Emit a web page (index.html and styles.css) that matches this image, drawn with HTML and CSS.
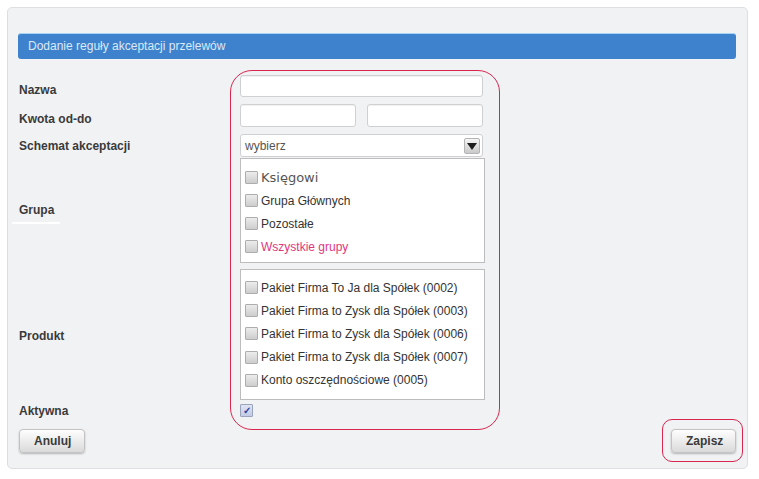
FILE: index.html
```html
<!DOCTYPE html>
<html>
<head>
    <title>Dodanie reguły akceptacji przelewów</title>
    <link rel="stylesheet" href="styles.css">
</head>
<body>
    <div class="panel">
        <div class="panel-header">Dodanie reguły akceptacji przelewów</div>

        <div class="form">
            <div class="label">Nazwa</div>
            <div class="control row-name">
                <input type="text" class="input wide">
            </div>

            <div class="label">Kwota od-do</div>
            <div class="control row-amount">
                <input type="text" class="input half">
                <input type="text" class="input half">
            </div>

            <div class="label">Schemat akceptacji</div>
            <div class="control row-select">
                <div class="select">
                    <span class="select-text">wybierz</span>
                    <span class="select-arrow"><span class="triangle"></span></span>
                </div>
            </div>

            <div class="label label-group">
                <span>Grupa</span>
                <span class="label-line"></span>
            </div>
            <div class="control row-group">
                <div class="list list-group">
                    <div class="item"><span class="cb"></span><span class="big">Księgowi</span></div>
                    <div class="item"><span class="cb"></span>Grupa Głównych</div>
                    <div class="item"><span class="cb"></span>Pozostałe</div>
                    <div class="item pink"><span class="cb"></span>Wszystkie grupy</div>
                </div>
            </div>

            <div class="label">Produkt</div>
            <div class="control row-product">
                <div class="list list-product">
                    <div class="item"><span class="cb"></span>Pakiet Firma To Ja dla Spółek (0002)</div>
                    <div class="item"><span class="cb"></span>Pakiet Firma to Zysk dla Spółek (0003)</div>
                    <div class="item"><span class="cb"></span>Pakiet Firma to Zysk dla Spółek (0006)</div>
                    <div class="item"><span class="cb"></span>Pakiet Firma to Zysk dla Spółek (0007)</div>
                    <div class="item"><span class="cb"></span>Konto oszczędnościowe (0005)</div>
                </div>
            </div>

            <div class="label">Aktywna</div>
            <div class="control row-active">
                <span class="cb checked">&#10003;</span>
            </div>

            <!-- red marker drawn over the controls column -->
            <div class="ring"></div>
        </div>

        <div class="button-row">
            <button class="button">Anuluj</button>
            <span class="ring-small">
                <button class="button">Zapisz</button>
            </span>
        </div>
    </div>
</body>
</html>
```

FILE: styles.css
```css
/* Page and panel */
body {
    margin: 0;
    padding: 7px 11px 0 7px;
    background-color: #fff;
    font-family: "Liberation Sans", Arial, sans-serif;
    font-size: 12px;
    color: #333;
}

.panel {
    background-color: #f1f2f4;
    border: 1px solid #dcdee1;
    border-radius: 5px;
    padding: 25px 11px 15px 10px;
}

.panel-header {
    background-color: #3e82cd;
    border-top: 1px solid #a6d4f2;
    border-radius: 3px;
    height: 25px;
    line-height: 25px;
    padding-left: 10px;
    color: #dce9f7;
    font-size: 12px;
}

/* Form grid */
.form {
    position: relative;
    display: grid;
    grid-template-columns: 222px 245px;
    margin-top: 16px;
}

.label {
    padding-left: 1px;
    font-weight: bold;
    color: #3a3a3a;
    align-self: center;
}

.label-group {
    display: flex;
    flex-direction: column;
}

.label-line {
    width: 48px;
    height: 2px;
    background-color: #fff;
    margin: 5px 0 0 -7px;
}

.control {
    display: flex;
}

.row-name { margin-bottom: 7px; }
.row-amount { margin-bottom: 7px; gap: 11px; }
.row-select { margin-bottom: 1px; }
.row-group { margin-bottom: 6px; }
.row-product { margin-bottom: 4px; }

.input {
    height: 23px;
    box-sizing: border-box;
    border: 1px solid #cfd0d2;
    border-radius: 3px;
    background-color: #fff;
    box-shadow: inset 0 1px 1px rgba(0, 0, 0, 0.06);
    padding: 0 4px;
    margin: 0;
}

.input.wide { width: 243px; height: 22px; }
.input.half { width: 116px; }

/* Fake select */
.select {
    width: 243px;
    height: 23px;
    box-sizing: border-box;
    border: 1px solid #cfd0d2;
    border-radius: 3px;
    background-color: #fff;
    display: flex;
    align-items: center;
    justify-content: space-between;
    padding: 0 2px 0 4px;
}

.select-text {
    color: #555;
}

.select-arrow {
    width: 16px;
    height: 16px;
    box-sizing: border-box;
    border: 1px solid #b4b4b4;
    border-radius: 2px;
    background: linear-gradient(#f6f6f6, #c9c9c9);
    display: flex;
    align-items: center;
    justify-content: center;
}

.triangle {
    width: 0;
    height: 0;
    border-left: 5px solid transparent;
    border-right: 5px solid transparent;
    border-top: 7px solid #1e1e1e;
    margin-top: 1px;
}

/* Checkbox lists */
.list {
    width: 245px;
    box-sizing: border-box;
    border: 1px solid #bdbdbd;
    background-color: #fff;
    padding-left: 4px;
}

.list-group { padding-top: 7px; padding-bottom: 4px; }
.list-product { padding-top: 6px; padding-bottom: 7px; }

.item {
    height: 23px;
    display: flex;
    align-items: center;
    color: #333;
}

.list-product .item {
    height: 23.2px;
}

.big {
    font-family: "DejaVu Sans", Verdana, sans-serif;
    font-size: 13px;
    color: #555;
}

.pink {
    color: #e2357c;
}

.cb {
    display: inline-block;
    width: 11px;
    height: 11px;
    border: 1px solid #adadad;
    border-radius: 1px;
    background: linear-gradient(#ececec, #cdcdcd);
    margin-right: 3px;
    flex-shrink: 0;
}

.cb.checked {
    background: linear-gradient(#dfe4f3, #c2cbe6);
    border-color: #9aa3bc;
    color: #2a44a6;
    font-size: 10px;
    line-height: 11px;
    text-align: center;
    font-weight: bold;
}

.row-active {
    height: 13px;
    align-items: center;
}

/* Red annotation rings */
.ring {
    position: absolute;
    top: -5px;
    left: 212px;
    width: 268px;
    height: 358px;
    border: 1px solid #d9264f;
    border-radius: 22px;
    pointer-events: none;
}

.ring-small {
    border: 1px solid #d9264f;
    border-radius: 10px;
    padding: 9px 6px 8px 8px;
    margin: -10px -7px -9px 0;
}

/* Buttons */
.button-row {
    display: flex;
    justify-content: space-between;
    align-items: center;
    margin-top: 11px;
    padding-left: 1px;
}

.button {
    height: 24px;
    box-sizing: border-box;
    border: 1px solid #c3c3c3;
    border-radius: 4px;
    background: linear-gradient(#fefefe, #dadada);
    box-shadow: 0 1px 2px rgba(0, 0, 0, 0.25);
    font-family: "Liberation Sans", Arial, sans-serif;
    font-size: 12px;
    font-weight: bold;
    color: #3a3a3a;
    padding: 0 14px;
    cursor: pointer;
    display: block;
}

.ring-small .button {
    width: 65px;
}

.button-row > .button {
    width: 66px;
}
```
